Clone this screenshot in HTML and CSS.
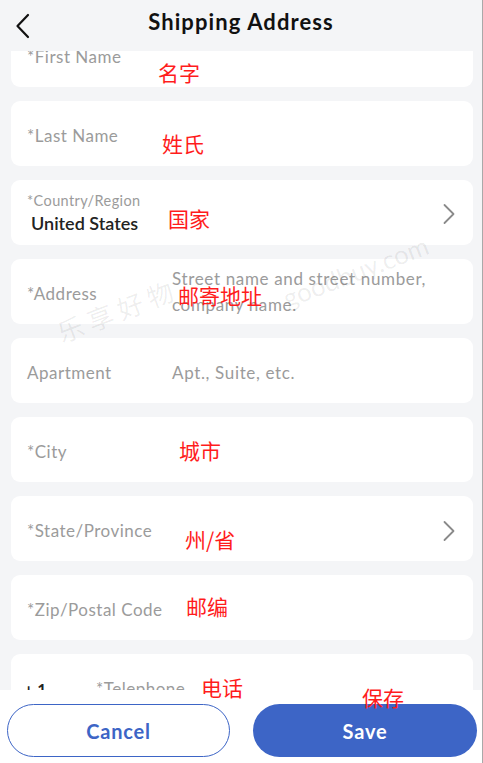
FILE: index.html
```html
<!DOCTYPE html>
<html lang="en">
<head>
<meta charset="utf-8">
<title>Shipping Address</title>
<link rel="stylesheet" href="styles.css">
</head>
<body>
<div class="app">
  <header class="topbar">
    <button class="back" aria-label="Back">
      <svg width="16" height="26" viewBox="0 0 16 26"><path d="M13 2 L2.5 13 L13 24" fill="none" stroke="#111" stroke-width="2.2" stroke-linecap="round" stroke-linejoin="round"/></svg>
    </button>
    <h1 class="title">Shipping Address</h1>
    <span></span>
  </header>

  <main class="scroll">
    <div class="list">
      <div class="card"><span class="label">*First Name</span><span class="value"></span></div>
      <div class="card"><span class="label">*Last Name</span><span class="value"></span></div>
      <div class="card card-select">
        <div class="stack">
          <span class="label-small">*Country/Region</span>
          <span class="selected">United States</span>
        </div>
        <svg class="chev" width="14" height="22" viewBox="0 0 14 22"><path d="M2.5 2 L11.5 11 L2.5 20" fill="none" stroke="#8a8a8a" stroke-width="1.8" stroke-linecap="round" stroke-linejoin="round"/></svg>
      </div>
      <div class="card"><span class="label">*Address</span><span class="value multi">Street name and street number, company name.</span></div>
      <div class="card"><span class="label">Apartment</span><span class="value">Apt., Suite, etc.</span></div>
      <div class="card"><span class="label">*City</span><span class="value"></span></div>
      <div class="card">
        <span class="label">*State/Province</span><span class="value"></span>
        <svg class="chev" width="14" height="22" viewBox="0 0 14 22"><path d="M2.5 2 L11.5 11 L2.5 20" fill="none" stroke="#8a8a8a" stroke-width="1.8" stroke-linecap="round" stroke-linejoin="round"/></svg>
      </div>
      <div class="card"><span class="label">*Zip/Postal Code</span><span class="value"></span></div>
      <div class="card card-tel"><span class="prefix">+ 1</span><span class="label">*Telephone</span></div>
    </div>
  </main>

  <footer class="actions">
    <button class="btn btn-outline">Cancel</button>
    <button class="btn btn-fill">Save</button>
  </footer>

  <div class="overlay" aria-hidden="true">
    <span class="wm wm-cjk">乐享好物</span>
    <span class="wm wm-lat">goodbuy.com</span>
    <span class="note n1">名字</span>
    <span class="note n2">姓氏</span>
    <span class="note n3">国家</span>
    <span class="note n4">邮寄地址</span>
    <span class="note n5">城市</span>
    <span class="note n6">州/省</span>
    <span class="note n7">邮编</span>
    <span class="note n8">电话</span>
    <span class="note n9">保存</span>
  </div>
</div>
</body>
</html>
```

FILE: styles.css
```css
* { box-sizing: border-box; }
html, body { margin: 0; padding: 0; }
body {
  font-family: "Lato", "Liberation Sans", "Noto Sans CJK SC", sans-serif;
  background: #ffffff;
}
.app {
  position: relative;
  width: 483px;
  height: 763px;
  display: flex;
  flex-direction: column;
  background: #f4f5f7;
  border-right: 1px solid #a9a9a9;
  overflow: hidden;
}
.topbar {
  height: 51px;
  flex: none;
  display: grid;
  grid-template-columns: 1fr auto 1fr;
  align-items: center;
  background: #f4f5f7;
}
.back {
  justify-self: start;
  margin-left: 15px;
  margin-top: 1px;
  padding: 0;
  border: 0;
  background: none;
  display: flex;
}
.title {
  margin: 0;
  font-size: 22px;
  font-weight: 700;
  color: #111;
  letter-spacing: 1.1px;
  padding-bottom: 9px;
}
.scroll {
  flex: 1;
  overflow: hidden;
}
.list {
  margin-top: -29px;
  padding: 0 9px 0 11px;
  display: flex;
  flex-direction: column;
  gap: 14px;
}
.card {
  height: 65px;
  flex: none;
  background: #fff;
  border-radius: 9px;
  display: flex;
  align-items: center;
  padding: 3px 18px 0 16px;
}
.label {
  width: 145px;
  flex: none;
  font-size: 17px;
  letter-spacing: 0.5px;
  color: #9b9b9b;
}
.value {
  flex: 1;
  font-size: 17px;
  letter-spacing: 0.65px;
  color: #9b9b9b;
}
.value.multi {
  line-height: 26px;
  margin-top: -3px;
}
.card-select { padding-top: 0; }
.stack {
  flex: 1;
  display: flex;
  flex-direction: column;
  gap: 3px;
}
.label-small {
  font-size: 14.5px;
  letter-spacing: 0.4px;
  color: #9b9b9b;
}
.selected {
  font-size: 18px;
  font-weight: 600;
  color: #222;
  padding-left: 4px;
}
.chev { flex: none; margin-right: -1px; margin-top: 2px; }
.card-tel { padding-left: 13px; }
.prefix {
  width: 72px;
  flex: none;
  font-size: 16px;
  font-weight: 700;
  color: #222;
}
.actions {
  height: 73px;
  flex: none;
  background: #fff;
  display: grid;
  grid-template-columns: 223px 224px;
  gap: 23px;
  padding: 14px 0 6px 7px;
}
.btn {
  height: 53px;
  border-radius: 27px;
  font-family: inherit;
  font-size: 20px;
  font-weight: 700;
  letter-spacing: 0.8px;
  cursor: pointer;
}
.btn-outline {
  background: #fff;
  border: 1px solid #3d65c6;
  color: #3d65c6;
}
.btn-fill {
  background: #3d65c6;
  border: 0;
  color: #fff;
}
.overlay {
  position: absolute;
  inset: 0;
  pointer-events: none;
}
.wm {
  position: absolute;
  color: rgba(0, 0, 0, 0.07);
  transform: rotate(-21deg);
  transform-origin: left center;
  white-space: nowrap;
}
.wm-cjk {
  left: 58px;
  top: 318px;
  font-family: "Noto Sans CJK SC", sans-serif;
  font-size: 26px;
  letter-spacing: 6px;
  line-height: 30px;
}
.wm-lat {
  left: 284px;
  top: 284px;
  font-family: "Lato", sans-serif;
  font-size: 26px;
  line-height: 30px;
}
.note {
  position: absolute;
  font-family: "Noto Sans CJK SC", sans-serif;
  font-size: 21px;
  line-height: 22px;
  color: #ff1c1c;
  white-space: nowrap;
}
.n1 { left: 158px; top: 61px; }
.n2 { left: 162px; top: 132px; }
.n3 { left: 168px; top: 207px; }
.n4 { left: 178px; top: 284px; }
.n5 { left: 179px; top: 439px; }
.n6 { left: 185px; top: 528px; }
.n7 { left: 186px; top: 595px; }
.n8 { left: 201px; top: 676px; }
.n9 { left: 362px; top: 686px; }
```
